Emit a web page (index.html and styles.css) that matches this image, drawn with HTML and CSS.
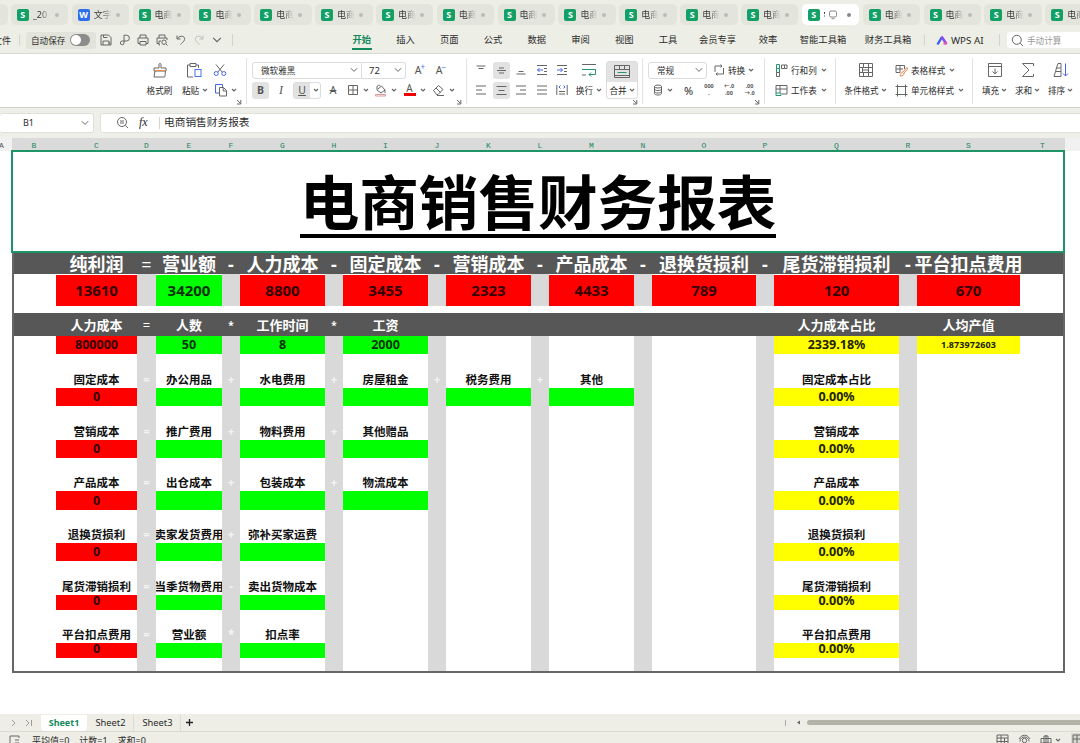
FILE: index.html
```html
<!DOCTYPE html>
<html lang="zh-CN">
<head>
<meta charset="utf-8">
<title>电商销售财务报表</title>
<link rel="stylesheet" href="styles.css">
</head>
<body>
<svg class="defs" aria-hidden="true">
  <symbol id="caret" viewBox="0 0 6 6"><path d="M1 2l2 2 2-2" stroke-width="1.2"/></symbol>
  <symbol id="chev" viewBox="0 0 10 10"><path d="M1.8 3.2L5 6.4l3.2-3.2"/></symbol>
  <symbol id="launch" viewBox="0 0 6 6"><path d="M1 1l3.5 3.5M4.8 1v4H1"/></symbol>
</svg>
<div class="tabs">
  <div class="tab"></div>
  <div class="tab"><b>S</b><span>_20</span><i></i></div>
  <div class="tab"><b class="w">W</b><span>文字</span><i></i></div>
  <div class="tab"><b>S</b><span>电商</span><i></i></div>
  <div class="tab"><b>S</b><span>电商</span><i></i></div>
  <div class="tab"><b>S</b><span>电商</span><i></i></div>
  <div class="tab"><b>S</b><span>电商</span><i></i></div>
  <div class="tab"><b>S</b><span>电商</span><i></i></div>
  <div class="tab"><b>S</b><span>电商</span><i></i></div>
  <div class="tab"><b>S</b><span>电商</span><i></i></div>
  <div class="tab"><b>S</b><span>电商</span><i></i></div>
  <div class="tab"><b>S</b><span>电商</span><i></i></div>
  <div class="tab"><b>S</b><span>电商</span><i></i></div>
  <div class="tab"><b>S</b><span>电商</span><i></i></div>
  <div class="tab on"><b>S</b><svg width="16" height="12" viewBox="0 0 16 12"><path d="M2.5 3v2M2.5 6.5v1" stroke="#444"/><rect x="7.5" y="2" width="7" height="6" rx="1.5" stroke="#888"/><path d="M9.5 9.7h3" stroke="#888"/></svg><i></i></div>
  <div class="tab"><b>S</b><span>电商</span><i></i></div>
  <div class="tab"><b>S</b><span>电商</span><i></i></div>
  <div class="tab"><b>S</b><span>电商</span><i></i></div>
  <div class="tab"><b>S</b><span>电商</span><i></i></div>
</div>

<div class="menu">
  <div class="quick">
    <span class="file">文件</span>
    <i class="bar"></i>
    <div class="autosave"><span>自动保存</span><u class="switch"></u></div>
    <svg width="14" height="14" viewBox="0 0 14 14"><path d="M2 2h7.5L12 4.5V12H2zM4 12V8h6v4M4.5 2v2.5h4M9.5 10h2"/></svg>
    <svg width="14" height="14" viewBox="0 0 14 14"><path d="M6 8V2.2h2.500a2.800 2.800 0 010 5.800H4.300a1.900 1.900 0 100 3.800A1.800 1.800 0 006 10z"/></svg>
    <svg width="14" height="14" viewBox="0 0 14 14"><path d="M4 5V2h6v3M4 10.500H2V5h10v5.500h-2M4 8.500h6V12H4z"/></svg>
    <svg width="14" height="14" viewBox="0 0 14 14"><path d="M4 5V2h6v3M4 10.500H2V5h10v2M5 12H4V8h2M12.500 12.500L11 11"/><circle cx="9" cy="9.200" r="2.200"/></svg>
    <svg width="14" height="14" viewBox="0 0 14 14"><path d="M3 2.500V6h3.500M3.200 5.800C5 2.800 9.500 2.300 10.500 5c.7 2-1 3.800-4 6.500"/></svg>
    <svg class="dim" width="14" height="14" viewBox="0 0 14 14"><path d="M11 2.500V6H7.500M10.800 5.800C9 2.800 4.500 2.300 3.500 5c-.7 2 1 3.800 4 6.500"/></svg>
    <svg width="12" height="12"><use href="#chev"/></svg>
    <i class="bar"></i>
  </div>
  <div class="items">
    <span class="cur">开始</span><span>插入</span><span>页面</span><span>公式</span><span>数据</span><span>审阅</span><span>视图</span><span>工具</span><span>会员专享</span><span>效率</span><span>智能工具箱</span><span>财务工具箱</span>
  </div>
  <i class="bar"></i>
  <div class="ai"><svg width="12" height="11" viewBox="0 0 12 11"><path d="M1.500 9.500L6 2" stroke="#3b5cf0" stroke-width="2.400"/><path d="M5.500 1.500L10.500 9" stroke="#8a4df2" stroke-width="2.400"/><path d="M7.500 8.500h3" stroke="#ec5bb5" stroke-width="2.400"/></svg><span>WPS AI</span></div>
  <i class="bar"></i>
  <div class="search"><svg width="13" height="13" viewBox="0 0 13 13"><circle cx="5.800" cy="5.800" r="4.500"/><path d="M9.200 9.200L12 12"/></svg><span>手动计算</span></div>
</div>

<div class="ribbon">
  <div class="group clip">
    <div class="row g-clip">
      <svg width="16" height="16" viewBox="0 0 16 16"><path d="M7 6V2.500a1 1 0 012 0V6h5v3H2V6zM3 9l-1 6h10.500c.7-1 .8-3 .8-6"/><path d="M2.500 8.500h11" stroke="#e8884a"/></svg>
      <svg width="16" height="16" viewBox="0 0 16 16"><path d="M7 15H1.500V3H4M10 3h2.500v3M4 1.500h6v3H4z"/><rect x="9" y="7.500" width="6" height="7" stroke="#4a74e0"/></svg>
      <svg width="14" height="14" viewBox="0 0 14 14"><path d="M3 1.500l6.500 8M11 1.500l-6.500 8"/><circle cx="3.200" cy="10.500" r="2" stroke="#4a66e8"/><circle cx="10.800" cy="10.500" r="2" stroke="#4a66e8"/></svg>
    </div>
    <div class="row g-clip">
      <span>格式刷</span>
      <span>粘贴<svg class="car"><use href="#caret"/></svg></span>
      <span><svg width="14" height="14" viewBox="0 0 14 14"><path d="M5 10H1.500V1.500h7V4" stroke="#4a66e8"/><path d="M5.500 4.500H9.500l3 3V13h-7zM9.200 4.500V8h3.300"/></svg><svg class="car"><use href="#caret"/></svg></span>
    </div>
    <svg class="la"><use href="#launch"/></svg>
  </div>
  <div class="group font">
    <div class="row g-font1">
      <div class="sel"><span>微软雅黑</span><svg width="10" height="10"><use href="#chev"/></svg></div>
      <div class="sel size"><span>72</span><svg width="10" height="10"><use href="#chev"/></svg></div>
      <span class="big">A<sup>+</sup></span><span class="big">A<sup>−</sup></span>
    </div>
    <div class="row g-font2">
      <span class="press"><strong>B</strong></span>
      <em>I</em>
      <div class="split"><span>U</span><svg class="car"><use href="#caret"/></svg></div>
      <s>A</s>
      <span><svg width="12" height="12" viewBox="0 0 12 12"><path d="M1.500 1.500h9v9h-9zM6 1.500v9M1.500 6h9"/></svg><svg class="car"><use href="#caret"/></svg></span>
      <span><svg width="13" height="13" viewBox="0 0 13 13"><path d="M4 5l3.500-3 3.500 4-4 3-4-3V3a2 2 0 013.500-1M11 6v3"/><path d="M1.500 10.500h10v1.500h-10z" stroke="#d99a9a"/></svg><svg class="car"><use href="#caret"/></svg></span>
      <span><u class="fc">A</u><svg class="car"><use href="#caret"/></svg></span>
      <span><svg width="13" height="13" viewBox="0 0 13 13"><path d="M1.500 6.500l5-5 4.500 4-5 5H4.500zM4 4l4.500 4.500M5 11.500h7"/></svg><svg class="car"><use href="#caret"/></svg></span>
    </div>
    <svg class="la"><use href="#launch"/></svg>
  </div>
  <div class="group align">
    <div class="acols">
      <div class="row g-al">
        <svg viewBox="0 0 12 12"><path d="M1.500 2h9M3.500 4.500h5"/></svg>
        <svg class="press" viewBox="0 0 12 12"><path d="M3.500 3.500h5M1.500 6h9M3.500 8.500h5"/></svg>
        <svg viewBox="0 0 12 12"><path d="M3.500 7.500h5M1.500 10h9"/></svg>
        <svg viewBox="0 0 12 12"><path d="M1 1.500h10M8 4.500h3M8 7.500h3M1 10.500h10"/><path d="M7 6H1.500M3.500 4l-2 2 2 2" stroke="#4a66e8"/></svg>
        <svg viewBox="0 0 12 12"><path d="M1 1.500h10M8 4.500h3M8 7.500h3M1 10.500h10"/><path d="M1 6h5.500M4.500 4l2 2-2 2" stroke="#4a66e8"/></svg>
        <svg class="wide" viewBox="0 0 16 14"><path d="M1 1.500h14M1 12h4"/><path d="M1 6.500h13.500V11.500H8M10 9.500l-2 2 2 2" stroke="#27946a"/></svg>
      </div>
      <div class="row g-al">
        <svg viewBox="0 0 12 12"><path d="M1 2h10M1 6h6M1 10h10"/></svg>
        <svg class="press" viewBox="0 0 12 12"><path d="M1 2h10M3 6h6M1 10h10"/></svg>
        <svg viewBox="0 0 12 12"><path d="M1 2h10M5 6h6M1 10h10"/></svg>
        <svg viewBox="0 0 12 12"><path d="M1 2h10M1 6h10M1 10h10"/></svg>
        <svg viewBox="0 0 12 12"><path d="M.8 1v10M11.200 1v10M3 7.500h6M3 10h6"/><path d="M4.500 1.500L3 3l1.500 1.500M7.500 1.500L9 3 7.500 4.500" stroke="#4a66e8"/></svg>
        <span>换行<svg class="car"><use href="#caret"/></svg></span>
      </div>
    </div>
    <div class="merge"><div><svg width="16" height="14" viewBox="0 0 16 14"><path d="M.5.500h15v12H.5zM.5 4.500h15M5.500.500v4M10.500.500v4M.5 10.500h15"/><path d="M3.500 7.500h9" stroke="#27946a"/></svg></div><span>合并<svg class="car"><use href="#caret"/></svg></span></div>
    <svg class="la"><use href="#launch"/></svg>
  </div>
  <div class="group num">
    <div class="row g-num1">
      <div class="sel"><span>常规</span><svg width="10" height="10"><use href="#chev"/></svg></div>
      <span><svg class="lead" width="12" height="12" viewBox="0 0 12 12"><path d="M2 8V2h7M7.500.5L9 2 7.500 3.500M10.500 4v6H3M4.500 8.500L3 10l1.500 1.500"/></svg>转换<svg class="car"><use href="#caret"/></svg></span>
    </div>
    <div class="row g-num2">
      <span><svg width="10" height="12" viewBox="0 0 10 12"><ellipse cx="5" cy="2.500" rx="3.500" ry="1.500"/><path d="M1.500 2.500v7c0 2 7 2 7 0v-7M1.500 5c0 2 7 2 7 0M1.500 7.500c0 2 7 2 7 0"/></svg><svg class="car"><use href="#caret"/></svg></span>
      <span class="pct">%</span>
      <div class="tiny"><div>000</div><div>,</div></div>
      <div class="tiny"><div>←.0</div><div>.00</div></div>
      <div class="tiny"><div>.00</div><div>→.0</div></div>
    </div>
    <svg class="la"><use href="#launch"/></svg>
  </div>
  <div class="group cells">
    <div class="row"><span><svg class="lead" width="13" height="13" viewBox="0 0 13 13"><path d="M1.500.5h3v4h-3zM1.500 4.500h3v4h-3z" stroke="#27946a"/><path d="M1.500 8.500h3v4h-3zM6.500 1h3v3.500h-3zM9.500 1H12v3.500H9.500"/></svg>行和列<svg class="car c2"><use href="#caret"/></svg></span></div>
    <div class="row"><span><svg class="lead" width="13" height="13" viewBox="0 0 13 13"><path d="M1 9V1.500h11V10H7M1 5h11M5 1.500V9"/><path d="M1 9h5v2.500H1z" stroke="#27946a"/></svg>工作表<svg class="car c2"><use href="#caret"/></svg></span></div>
  </div>
  <div class="group styles">
    <div class="stack"><svg width="16" height="16" viewBox="0 0 16 16"><path d="M1.500 1.500h13v13h-13zM1.500 5.500h13M1.500 10.500h13M5.500 1.500v4M10.500 1.500v4M4.500 5.500v5M10.500 5.500v9M5.500 10.500v4M4.500 8h6"/></svg><span>条件格式<svg class="car"><use href="#caret"/></svg></span></div>
    <div class="lines">
      <div class="row"><span><svg class="lead" width="13" height="13" viewBox="0 0 13 13"><path d="M1 1.500h8.500V5M1 1.500v7h4M1 5h7M5 1.500v7"/><path d="M12 3.500L8 8c-2 0-2 2-3 4 3 0 4-1 4-3l3.500-4z" stroke="#e8884a"/></svg>表格样式<svg class="car c2"><use href="#caret"/></svg></span></div>
      <div class="row"><span><svg class="lead" width="13" height="13" viewBox="0 0 13 13"><path d="M.5 2.500h12M.5 10.500h12M2.500.500v12M10.500.500v12"/></svg>单元格样式<svg class="car c2"><use href="#caret"/></svg></span></div>
    </div>
  </div>
  <div class="group edit">
    <div class="stack"><svg width="16" height="16" viewBox="0 0 16 16"><path d="M1.500 1.500h13v13h-13zM1.500 4.500h13M8 6.500V12M5.500 9.500L8 12l2.500-2.500"/></svg><span>填充<svg class="car"><use href="#caret"/></svg></span></div>
    <div class="stack"><svg width="16" height="16" viewBox="0 0 16 16"><path d="M13.500 4V1.500H2.500L9 8l-6.500 6.500h11V12"/></svg><span>求和<svg class="car"><use href="#caret"/></svg></span></div>
    <div class="stack"><svg width="16" height="16" viewBox="0 0 16 16"><path d="M3.500 6L5 1.500h3V14.500M3.500 6h4M2.500 9.500L1 14.500h7M2.500 9.500H8M3.500 6l-1 3.500"/><path d="M12.500 1.500v12.500M10 11.500l2.500 2.500 2.500-2.500" stroke="#4a66e8"/></svg><span>排序<svg class="car"><use href="#caret"/></svg></span></div>
  </div>
</div>

<div class="formula">
  <div class="name"><span>B1</span><svg width="10" height="10"><use href="#chev"/></svg></div>
  <div class="fx">
    <svg width="13" height="13" viewBox="0 0 13 13"><circle cx="6" cy="6" r="4.500"/><path d="M9.300 9.300L12 12M4 5h4M4 7h4"/></svg>
    <em>fx</em><i class="bar"></i><span>电商销售财务报表</span>
  </div>
</div>

<div class="heads">
  <span class="a">A</span><span>B</span><span>C</span><span>D</span><span>E</span><span>F</span><span>G</span><span>H</span><span>I</span><span>J</span><span>K</span><span>L</span><span>M</span><span>N</span><span>O</span><span>P</span><span>Q</span><span>R</span><span>S</span><span>T</span>
</div>

<div class="sheetwrap">
<div class="sheet">
  <div class="dark r2"></div><div class="dark r5"></div>
  <div class="strip cD"></div><div class="strip cF"></div><div class="strip cH"></div><div class="strip cJ"></div><div class="strip cL"></div><div class="strip cN"></div><div class="strip cP"></div><div class="strip cR"></div>
  <div class="strip top cD"></div><div class="strip top cF"></div><div class="strip top cH"></div><div class="strip top cJ"></div><div class="strip top cL"></div><div class="strip top cN"></div><div class="strip top cP"></div><div class="strip top cR"></div>

  <div class="frame"></div>
  <div class="title"><span>电商销售财务报表</span></div>

  <div class="h r2 cC">纯利润</div><div class="h r2 cD">=</div><div class="h r2 cE">营业额</div><div class="h r2 cF">-</div><div class="h r2 cG">人力成本</div><div class="h r2 cH">-</div><div class="h r2 cI">固定成本</div><div class="h r2 cJ">-</div><div class="h r2 cK">营销成本</div><div class="h r2 cL">-</div><div class="h r2 cM">产品成本</div><div class="h r2 cN">-</div><div class="h r2 cO">退换货损利</div><div class="h r2 cP">-</div><div class="h r2 cQ">尾货滞销损利</div><div class="h r2 cR">-</div><div class="h r2 cS">平台扣点费用</div>

  <div class="v r3 cC red">13610</div><div class="v r3 cE green">34200</div><div class="v r3 cG red">8800</div><div class="v r3 cI red">3455</div><div class="v r3 cK red">2323</div><div class="v r3 cM red">4433</div><div class="v r3 cO red">789</div><div class="v r3 cQ red">120</div><div class="v r3 cS red">670</div>

  <div class="h r5 cC">人力成本</div><div class="h r5 cD">=</div><div class="h r5 cE">人数</div><div class="h r5 cF">*</div><div class="h r5 cG">工作时间</div><div class="h r5 cH">*</div><div class="h r5 cI">工资</div><div class="h r5 cQ">人力成本占比</div><div class="h r5 cS">人均产值</div>
  <div class="v r6 cC red">800000</div><div class="v r6 cE green">50</div><div class="v r6 cG green">8</div><div class="v r6 cI green">2000</div><div class="v r6 cQ yellow">2339.18%</div><div class="v r6 cS yellow small">1.873972603</div>

  <div class="l r7 cC">固定成本</div><div class="l r7 cD op">=</div><div class="l r7 cE">办公用品</div><div class="l r7 cF op">+</div><div class="l r7 cG">水电费用</div><div class="l r7 cH op">+</div><div class="l r7 cI">房屋租金</div><div class="l r7 cJ op">+</div><div class="l r7 cK">税务费用</div><div class="l r7 cL op">+</div><div class="l r7 cM">其他</div><div class="l r7 cQ">固定成本占比</div>
  <div class="v r8 cC red">0</div><div class="v r8 cE green"></div><div class="v r8 cG green"></div><div class="v r8 cI green"></div><div class="v r8 cK green"></div><div class="v r8 cM green"></div><div class="v r8 cQ yellow">0.00%</div>

  <div class="l r9 cC">营销成本</div><div class="l r9 cD op">=</div><div class="l r9 cE">推广费用</div><div class="l r9 cF op">+</div><div class="l r9 cG">物料费用</div><div class="l r9 cH op">+</div><div class="l r9 cI">其他赠品</div><div class="l r9 cQ">营销成本</div>
  <div class="v r10 cC red">0</div><div class="v r10 cE green"></div><div class="v r10 cG green"></div><div class="v r10 cI green"></div><div class="v r10 cQ yellow">0.00%</div>

  <div class="l r11 cC">产品成本</div><div class="l r11 cD op">=</div><div class="l r11 cE">出仓成本</div><div class="l r11 cF op">+</div><div class="l r11 cG">包装成本</div><div class="l r11 cH op">+</div><div class="l r11 cI">物流成本</div><div class="l r11 cQ">产品成本</div>
  <div class="v r12 cC red">0</div><div class="v r12 cE green"></div><div class="v r12 cG green"></div><div class="v r12 cI green"></div><div class="v r12 cQ yellow">0.00%</div>

  <div class="l r13 cC">退换货损利</div><div class="l r13 cD op">=</div><div class="l r13 cE">卖家发货费用</div><div class="l r13 cF op">+</div><div class="l r13 cG">弥补买家运费</div><div class="l r13 cQ">退换货损利</div>
  <div class="v r14 cC red">0</div><div class="v r14 cE green"></div><div class="v r14 cG green"></div><div class="v r14 cQ yellow">0.00%</div>

  <div class="l r15 cC">尾货滞销损利</div><div class="l r15 cD op">=</div><div class="l r15 cE">当季货物费用</div><div class="l r15 cF op">-</div><div class="l r15 cG">卖出货物成本</div><div class="l r15 cQ">尾货滞销损利</div>
  <div class="v r16 cC red">0</div><div class="v r16 cE green"></div><div class="v r16 cG green"></div><div class="v r16 cQ yellow">0.00%</div>

  <div class="l r17 cC">平台扣点费用</div><div class="l r17 cD op">=</div><div class="l r17 cE">营业额</div><div class="l r17 cF op">*</div><div class="l r17 cG">扣点率</div><div class="l r17 cQ">平台扣点费用</div>
  <div class="v r18 cC red">0</div><div class="v r18 cE green"></div><div class="v r18 cG green"></div><div class="v r18 cQ yellow">0.00%</div>
</div>
</div>

<div class="sheets">
  <svg class="nav" width="24" height="10" viewBox="0 0 24 10"><path d="M2 2l3 3-3 3M16 2l3 3-3 3M21.500 2v6"/></svg>
  <span class="st on">Sheet1</span><span class="st">Sheet2</span><span class="st">Sheet3</span>
  <svg class="plus" width="9" height="9" viewBox="0 0 9 9"><path d="M4.500 1v7M1 4.500h7" stroke="#222" stroke-width="1.300"/></svg>
  <i class="grip"></i><svg class="larr" width="5" height="5" viewBox="0 0 5 5"><path d="M4 .5v4L1 2.500z" fill="#666" stroke="none"/></svg><div class="scroll"></div>
</div>
<div class="status">
  <svg width="11" height="11" viewBox="0 0 11 11"><path d="M10 3V1H1v8h5M6 5h4M6 8h4"/></svg>
  <span>平均值=0</span><span>计数=1</span><span>求和=0</span>
  <div class="views">
    <svg width="13" height="12" viewBox="0 0 13 12"><path d="M1 1h11v10H1zM1 4h11M1 7.500h11M5 1v10M8.500 4v7"/></svg>
    <svg width="13" height="12" viewBox="0 0 13 12"><path d="M1 5c3-5 8-5 11 0M2 7.500c0-6 9-6 9 0"/><circle cx="6.500" cy="6.500" r="2.200"/></svg>
    <svg width="12" height="12" viewBox="0 0 12 12"><path d="M1 4.500h10V9H1zM4 2h4v7H4zM6 1v10"/></svg>
    <svg class="car"><use href="#caret"/></svg>
    <b><svg width="12" height="12" viewBox="0 0 12 12"><path d="M1 1h10v10H1zM1 5h10M5 1v10"/></svg></b>
  </div>
</div>
</body>
</html>
```
FILE: styles.css
```css
* { box-sizing: border-box; }
body {
  margin: 0;
  width: 1080px;
  height: 743px;
  overflow: hidden;
  background: #fff;
  color: #2b2b2b;
  font-family: "Noto Sans", "Noto Sans CJK SC", sans-serif;
  font-size: 8.6px;
  white-space: nowrap;
  display: flex;
  flex-direction: column;
}
.defs { display: none; }
svg { fill: none; stroke: #666; stroke-width: 1; flex: none; }
.bar { width: 1px; height: 12px; background: #d5d5cd; flex: none; }
.car { width: 6px; height: 6px; margin-left: 3px; }
.c2 { margin-left: 4px; }

/* document tabs */
.tabs { height: 28px; flex: none; display: flex; gap: 3.35px; padding-top: 4px; background: #edeee6; }
.tab {
  width: 57.5px; height: 21px; flex: none; border-radius: 5px; background: #e3e4db;
  display: flex; align-items: center; padding-left: 6px;
}
.tab:first-child { margin-left: -50px; }
.tab b {
  width: 12px; height: 12px; border-radius: 2px; background: #12a066; color: #fff;
  font-size: 9px; line-height: 12px; text-align: center; flex: none;
}
.tab b.w { background: #2d6fe8; }
.tab span {
  width: 17px; margin-left: 4px; overflow: hidden; font-size: 9px;
  background: linear-gradient(90deg, #333 45%, #d0d0c8 95%);
  background-clip: text; -webkit-background-clip: text; color: transparent;
}
.tab i { width: 4px; height: 4px; border-radius: 2px; background: #bbbcb5; margin-left: 5px; }
.tab.on { background: #fff; }
.tab.on svg { margin-left: 2px; }
.tab.on i { background: #888; margin-left: 9px; }

/* menu bar */
.menu { height: 26px; flex: none; display: flex; align-items: center; padding-bottom: 1px; background: #edeee6; border-bottom: 1px solid #d8d9d1; }
.menu > * { flex: none; }
.quick { width: 340px; height: 24px; display: flex; align-items: center; }
.file { margin-left: -7px; width: 18px; font-size: 9px; margin-right: 8px; }
.autosave { display: flex; align-items: center; gap: 5px; width: 70px; height: 17px; margin: 0 3px 0 6px; padding-left: 5px; background: #e2e3da; border-radius: 3px; }
.switch { width: 20px; height: 12px; border-radius: 6px; background: #8c8c8c; display: block; padding: 1px; }
.switch::before { content: ""; display: block; width: 10px; height: 10px; border-radius: 5px; background: #fff; }
.quick > svg { margin-right: 4.7px; }
.quick .dim { opacity: .35; }
.quick > svg + .bar { margin-left: 4px; }
.items { display: flex; width: 584px; font-size: 9.3px; line-height: 20px; }
.items span { width: 43.75px; text-align: center; flex: none; }
.items .cur { color: #128a5c; font-weight: bold; background: linear-gradient(#128a5c, #128a5c) center bottom / 20px 2px no-repeat; }
.items span:nth-child(9) { width: 55px; }
.items span:nth-child(10) { width: 46px; }
.items span:nth-child(11) { width: 64px; }
.items span:nth-child(12) { width: 66px; }
.ai { display: flex; align-items: center; gap: 3px; width: 74px; padding-left: 11px; font-size: 9.8px; }
.search { display: flex; align-items: center; gap: 3px; width: 90px; height: 16px; margin-left: 7px; padding-left: 4px; background: #fff; border-radius: 3px; color: #999; }

/* ribbon */
.ribbon { height: 54px; flex: none; display: flex; align-items: stretch; background: #fff; border-bottom: 1px solid #cfd0c8; }
.group { position: relative; flex: none; padding-top: 6px; }
.group::after { content: ""; position: absolute; right: 0; top: 4px; bottom: 3px; width: 1px; background: #e2e2e2; }
.group:last-child::after { display: none; }
.la { position: absolute; right: 5px; bottom: 2px; width: 6px; height: 6px; }
.row { display: grid; height: 20px; align-items: center; justify-items: center; }
.row span, .stack span, .merge span { display: flex; align-items: center; justify-content: center; }
.row .lead { margin-right: 3px; }
.press { background: #e2e2e2; border-radius: 3px; }
.clip { width: 247px; padding-left: 140px; }
.g-clip { grid-template-columns: 39px 32px 27px; justify-content: start; }
.g-clip > svg:last-child { justify-self: start; margin-left: 2px; }
.g-clip > span:nth-child(3) { margin-left: 2px; }
.g-clip > svg:nth-child(2) { margin-right: 2px; }
.font { width: 220px; padding-left: 5px; }
.g-font1 { grid-template-columns: 110px 44px 28px 14px; justify-content: start; }
.sel { display: flex; align-items: center; justify-content: space-between; width: 100%; height: 17px; padding: 0 2px 0 8px; border: 1px solid #dcdcdc; border-radius: 3px; }
.g-font1 .sel:first-child { border-radius: 3px 0 0 3px; }
.g-font1 .size { border-left: 0; border-radius: 0 3px 3px 0; padding-left: 7px; font-size: 9.5px; }
.big { font-size: 10.5px; color: #555; }
.big sup { color: #4a66e8; font-size: 8px; line-height: 8px; align-self: flex-start; margin-left: -1px; }
.g-font2 { grid-template-columns: 17px 24px 28px 24px 25px 30px 29px 29px; justify-content: start; font-size: 10.5px; color: #555; }
.g-font2 .press { width: 17px; height: 17px; }
.g-font2 em { font-family: "Liberation Serif", serif; font-size: 12px; }
.g-font2 .car { margin-left: 4px; }
.split { display: flex; align-items: center; width: 28px; height: 17px; border: 1px solid #dcdcdc; border-radius: 3px; }
.split span { width: 16px; height: 15px; background: #e2e2e2; text-decoration: underline; line-height: 14px; }
.g-font2 .split .car { margin-left: 3px; }
.fc { display: block; width: 12px; height: 12px; line-height: 9px; border-bottom: 3px solid #e00; text-decoration: none; text-align: center; font-size: 10px; }
.align { display: flex; width: 176px; padding-left: 4px; }
.acols { width: 135px; }
.g-al { grid-template-columns: 20.2px 20.2px 20.2px 20.2px 20.2px 34px; }
.g-al > svg { width: 12px; height: 12px; }
.g-al > svg.press { width: 17px; height: 17px; padding: 2.5px; }
.g-al > svg.wide { width: 16px; height: 14px; }
.merge { width: 32px; height: 38px; margin-top: 1px; border: 1px solid #dcdcdc; border-radius: 3px; }
.merge div { height: 20px; background: #e2e2e2; display: flex; align-items: center; justify-content: center; }
.merge span { height: 16px; }
.merge .car { margin-left: 2px; }
.num { width: 122px; padding-left: 5px; }
.g-num1 { grid-template-columns: 59px 53px; justify-content: start; }
.g-num2 { grid-template-columns: 30px 21px 20px 20px 21px; justify-content: start; }
.g-num2 .car { margin-left: 4px; }
.row .pct { font-size: 11px; }
.tiny { font-size: 5.5px; font-weight: bold; text-align: center; color: #555; }
.tiny div { height: 7px; line-height: 7px; }
.cells { width: 71px; padding-left: 10px; }
.cells .row, .lines .row { justify-items: start; }
.styles { width: 137px; display: flex; }
.stack { height: 40px; display: grid; grid-template-rows: 20px 20px; align-items: center; justify-items: center; }
.stack .car { margin-left: 2px; }
.styles .stack { width: 59px; }
.edit { width: 108px; display: flex; padding-left: 5px; }
.edit .stack { width: 33px; flex: none; }

/* formula bar */
.formula { height: 30px; flex: none; display: flex; align-items: center; gap: 6px; padding-bottom: 1px; background: #eeefe8; }
.name, .fx { display: flex; align-items: center; height: 20px; background: #fff; border: 1px solid #dfe0d9; border-radius: 3px; }
.name { width: 94px; border-left: 0; padding: 0 3px 0 23px; justify-content: space-between; font-size: 9px; }
.fx { flex: 1; padding-left: 15px; margin-right: -4px; }
.fx em { width: 12px; margin: 0 8px 0 10px; font-family: "Liberation Serif", serif; font-size: 12px; }
.fx span { margin: -3px 0 0 4px; font-size: 10.7px; }

/* column headers, sheet columns B to T follow column A */
.heads, .sheet { display: grid; flex: none; }
.heads {
  height: 13px; background: #f1f1f1;
  grid-template-columns: 12px 44px 81px 19px 66px 18px 85px 18px 85px 18px 85px 18px 85px 18px 104px 18px 125px 18px 103px 45px;
  font: 8px/15px "Liberation Mono", monospace; color: #16865a; text-align: center;
}
.heads span { background: #dadada; height: 13px; }
.heads .a { background: none; color: #555; text-align: left; margin-left: -1px; }
.sheetwrap { height: 563px; flex: none; padding-left: 12px; }
.sheet {
  position: relative; width: 1053px; height: 522px;
  grid-template-columns: 44px 81px 19px 66px 18px 85px 18px 85px 18px 85px 18px 85px 18px 104px 18px 125px 18px 103px 45px;
  grid-template-rows: 102px 21px 32px 7px 23px 18px 34px 18px 34px 18px 33px 19px 33px 18px 34px 15px 33px 15px 14px;
}
.cC { grid-column: 2; } .cD { grid-column: 3; } .cE { grid-column: 4; } .cF { grid-column: 5; }
.cG { grid-column: 6; } .cH { grid-column: 7; } .cI { grid-column: 8; } .cJ { grid-column: 9; }
.cK { grid-column: 10; } .cL { grid-column: 11; } .cM { grid-column: 12; } .cN { grid-column: 13; }
.cO { grid-column: 14; } .cP { grid-column: 15; } .cQ { grid-column: 16; } .cR { grid-column: 17; }
.cS { grid-column: 18; }
.r2 { grid-row: 2; } .r3 { grid-row: 3; } .r5 { grid-row: 5; } .r6 { grid-row: 6; } .r7 { grid-row: 7; }
.r8 { grid-row: 8; } .r9 { grid-row: 9; } .r10 { grid-row: 10; } .r11 { grid-row: 11; } .r12 { grid-row: 12; }
.r13 { grid-row: 13; } .r14 { grid-row: 14; } .r15 { grid-row: 15; } .r16 { grid-row: 16; } .r17 { grid-row: 17; }
.r18 { grid-row: 18; }
.dark { grid-column: 1 / -1; background: #575757; }
.strip { grid-row: 6 / -1; background: #d9d9d9; }
.strip.top { grid-row: 3; }
.frame { grid-column: 1 / -1; grid-row: 2 / -1; border: 2px solid #666; border-top: 0; margin-bottom: -1px; }
.title {
  grid-column: 1 / -1; grid-row: 1; margin: -1px 0 0 -1px; border: 2px solid #1f9467;
  display: flex; justify-content: center; align-items: flex-start; color: #000;
}
.title span { margin-top: 11px; height: 75px; border-bottom: 4px solid #000; font: bold 59.6px/72px "Noto Sans CJK SC", sans-serif; }
.h, .v, .l { display: flex; align-items: center; justify-content: center; font-weight: bold; min-width: 0; }
.h { color: #fff; }
.h.r2 { font-size: 18px; line-height: 21px; padding-top: 1px; }
.h.cD { font-weight: normal; }
.h.r5 { font-size: 13px; line-height: 23px; padding-top: 1px; }
.h.r5.cF, .h.r5.cH { font-size: 10px; }
.v { color: #111; font-size: 12.5px; line-height: 18px; }
.v.r3 { font-size: 15px; margin-top: 1px; padding-bottom: 2px; }
.v.r16, .v.r18 { line-height: 11px; align-items: flex-start; }
.v.small { font-size: 9px; letter-spacing: .1px; }
.l { color: #111; font-size: 11.5px; line-height: 17px; align-items: flex-end; overflow: hidden; }
.l.op { color: #f4f4f4; }
.red { background: #f00; color: #300; }
.green { background: #0f0; color: #030; }
.yellow { background: #ff0; color: #220; }

/* sheet tabs and status */
.sheets { height: 18px; flex: none; display: flex; align-items: center; background: #eeeee6; border-bottom: 1px solid #d9dad2; font-size: 9px; }
.nav { margin: 0 7px 0 10px; stroke: #888; opacity: .8; }
.st { width: 47px; text-align: center; line-height: 16px; border-right: 1px solid #dcdcd4; }
.st.on { width: 46px; background: #fff; color: #128a5c; font-weight: bold; border: 0; border-radius: 0 0 4px 4px; }
.st:not(.on) { padding-left: 1px; font-size: 9.3px; }
.plus { margin-left: 4px; }
.grip { width: 1px; height: 6px; background: #aaa; margin-left: 591px; }
.larr { margin: 0 6px 0 10px; }
.scroll { flex: 1; height: 5px; border-radius: 3px 0 0 3px; background: #b3b3a8; }
.status { height: 14px; flex: none; display: flex; align-items: center; gap: 10px; padding: 2px 0 0 9px; background: #eeeee6; font-size: 9px; }
.status > svg { margin-right: 2px; }
.views { margin-left: auto; display: flex; align-items: center; gap: 10px; padding-right: 8px; margin-right: -8px; }
.views svg { margin-left: -1px; }
.views .car { margin-left: -7px; }
.views b { width: 9px; height: 14px; overflow: hidden; background: #d8d9d0; padding: 1px 2px; }
```
